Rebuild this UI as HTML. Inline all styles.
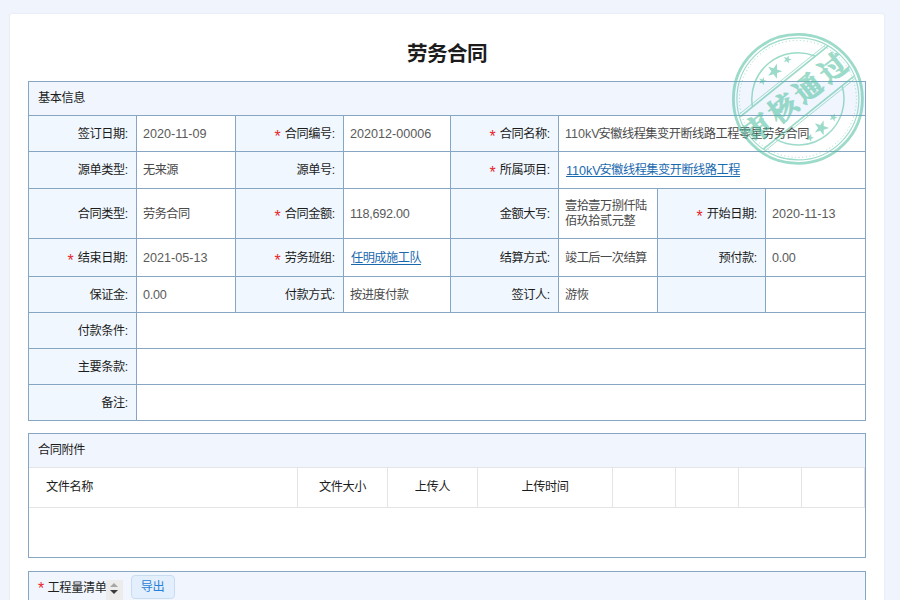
<!DOCTYPE html>
<html lang="zh-CN"><head><meta charset="utf-8"><title>劳务合同</title>
<style>
html,body{margin:0;padding:0}
body{width:900px;height:600px;overflow:hidden;background:#f0f4fc;font-family:"Liberation Sans","Noto Sans CJK SC",sans-serif;font-size:12.6px;color:#5a5a5a;position:relative}
.card{position:absolute;left:10px;top:14px;width:874px;height:600px;background:#fff;border-radius:2px;box-shadow:0 0 2px rgba(150,165,200,.28)}
.ttl{position:absolute;left:0;top:26px;width:874px;height:28px;display:flex;justify-content:center;color:#1c1c1c}
.t{position:relative;display:inline-block;flex:none;white-space:nowrap;font-family:"Liberation Sans","Noto Sans CJK SC",sans-serif;font-size:12.2px;line-height:16px;height:16px;letter-spacing:-0.42px}
.v .t{letter-spacing:-0.5px}
.ttl .t{font-size:20.6px;font-weight:bold;letter-spacing:-0.6px;line-height:28px;height:28px}
.two .t{line-height:15px;height:15px}
.tb{position:absolute;left:28px;width:838px;background:#86a6c3}
#t1{top:81px;height:340px}
.c{position:absolute;display:flex;align-items:center;box-sizing:border-box}
.hd{background:#f1f6fe;padding-left:9px;color:#1c1c1c;padding-bottom:2px}
.l{background:#f0f7fe;justify-content:flex-end;padding-right:6.9px;color:#1c1c1c}
.v{background:#fff;padding-left:6px}
.v .t{color:#4a4a4a}
.v .lk .t{color:inherit}
.k{margin-right:-1.2px}
.n.p{letter-spacing:-.25px}
.n{letter-spacing:0;position:relative;top:0.5px;white-space:nowrap}
.rq{position:relative;display:block;flex:none;width:6px;height:6px;margin-right:4px;top:.4px;line-height:0;font-weight:normal}
.rq i{position:absolute;left:-0.1px;top:-2.4px;color:#e6262c;font-style:normal;font-weight:normal;font-family:"Liberation Sans",sans-serif;font-size:15.9px;line-height:16px;letter-spacing:0}
.lk{color:#1a69af;display:flex;align-items:center;margin-left:1px;position:relative}
.lk:after{content:"";position:absolute;left:0;right:0;bottom:1px;height:1px;background:#1a69af}
.two{display:flex;flex-direction:column}
#t2{top:433px;height:125px}
#t2 .in{position:absolute;left:1px;top:1px;right:1px;bottom:1px;background:#fff}
#t2 .h2{position:absolute;left:0;top:0;right:0;height:33px;background:#f1f6fe;border-bottom:1px solid #e3e5e8;display:flex;align-items:center;padding-left:9px;color:#1c1c1c;box-sizing:content-box;padding-bottom:0}
#t2 .h2 .t{top:-1px}
.th{position:absolute;top:34px;height:39px;display:flex;align-items:center;justify-content:center;border-right:1px solid #e4e4e4;color:#1c1c1c;margin-left:-1px}
.th .t{top:-1px}
.th.first{justify-content:flex-start;padding-left:16px;box-sizing:border-box;margin-left:0}
.hl{position:absolute;left:0;right:0;top:73px;height:1px;background:#e4e4e4}
#t3{top:571px;height:40px}
#t3 .in{position:absolute;left:1px;top:1px;right:1px;bottom:0;background:#f1f6fe}
.r3{top:-1.2px;margin-right:3.6px}
.p3{position:absolute;left:9px;top:8px;height:16px;display:flex;align-items:center;color:#1f1f1f}
.sort{position:absolute;left:77px;top:8px;width:16.5px;height:20px;background:#ececec}
.sort:before{content:"";position:absolute;left:4.4px;top:3.2px;border:4px solid transparent;border-top:0;border-bottom:4.4px solid #a6a6a6}
.sort:after{content:"";position:absolute;left:4.4px;top:10px;border:4px solid transparent;border-bottom:0;border-top:4.4px solid #3c3c3c}
.btn{position:absolute;left:101.5px;top:3px;width:44px;height:24px;box-sizing:border-box;border:1px solid #c8dcf1;border-radius:4px;background:#e3effc;color:#2a7fd6;display:flex;align-items:center;justify-content:center}
.stamp{position:absolute;left:731.5px;top:33.3px;opacity:.56}
</style></head><body>
<div class="card">
<div class="ttl"><span class="t" style="width:80px">劳务合同</span></div>
</div>
<div class="tb" id="t1">
<div class="c hd" style="left:1px;top:1px;width:836px;height:33px"><span class="t" style="width:47.12px">基本信息</span></div>
<div class="c l" style="left:1px;top:35px;width:107px;height:35px"><span class="t" style="width:51.42px">签订日期:</span></div>
<div class="c v" style="left:109px;top:35px;width:98px;height:35px"><span class="n">2020-11-09</span></div>
<div class="c l" style="left:208px;top:35px;width:107px;height:35px"><b class="rq"><i>*</i></b><span class="t" style="width:51.42px">合同编号:</span></div>
<div class="c v" style="left:316px;top:35px;width:106px;height:35px"><span class="n">202012-00006</span></div>
<div class="c l" style="left:423px;top:35px;width:107px;height:35px"><b class="rq"><i>*</i></b><span class="t" style="width:51.42px">合同名称:</span></div>
<div class="c v" style="left:531px;top:35px;width:306px;height:35px"><span class="n k">110kV</span><span class="t" style="width:210.6px">安徽线程集变开断线路工程零星劳务合同</span></div>
<div class="c l" style="left:1px;top:71px;width:107px;height:36px"><span class="t" style="width:51.42px">源单类型:</span></div>
<div class="c v" style="left:109px;top:71px;width:98px;height:36px"><span class="t" style="width:35.1px">无来源</span></div>
<div class="c l" style="left:208px;top:71px;width:107px;height:36px"><span class="t" style="width:39.64px">源单号:</span></div>
<div class="c v" style="left:316px;top:71px;width:106px;height:36px"></div>
<div class="c l" style="left:423px;top:71px;width:107px;height:36px"><b class="rq"><i>*</i></b><span class="t" style="width:51.42px">所属项目:</span></div>
<div class="c v" style="left:531px;top:71px;width:306px;height:36px"><a class="lk"><span class="n k">110kV</span><span class="t" style="width:140.4px">安徽线程集变开断线路工程</span></a></div>
<div class="c l" style="left:1px;top:108px;width:107px;height:49px"><span class="t" style="width:51.42px">合同类型:</span></div>
<div class="c v" style="left:109px;top:108px;width:98px;height:49px"><span class="t" style="width:46.8px">劳务合同</span></div>
<div class="c l" style="left:208px;top:108px;width:107px;height:49px"><b class="rq"><i>*</i></b><span class="t" style="width:51.42px">合同金额:</span></div>
<div class="c v" style="left:316px;top:108px;width:106px;height:49px"><span class="n p">118,692.00</span></div>
<div class="c l" style="left:423px;top:108px;width:107px;height:49px"><span class="t" style="width:51.42px">金额大写:</span></div>
<div class="c v" style="left:531px;top:108px;width:98px;height:49px"><span class="two"><span class="t" style="width:81.9px">壹拾壹万捌仟陆</span><span class="t" style="width:70.2px">佰玖拾贰元整</span></span></div>
<div class="c l" style="left:630px;top:108px;width:107px;height:49px"><b class="rq"><i>*</i></b><span class="t" style="width:51.42px">开始日期:</span></div>
<div class="c v" style="left:738px;top:108px;width:99px;height:49px"><span class="n">2020-11-13</span></div>
<div class="c l" style="left:1px;top:158px;width:107px;height:37px"><b class="rq"><i>*</i></b><span class="t" style="width:51.42px">结束日期:</span></div>
<div class="c v" style="left:109px;top:158px;width:98px;height:37px"><span class="n">2021-05-13</span></div>
<div class="c l" style="left:208px;top:158px;width:107px;height:37px"><b class="rq"><i>*</i></b><span class="t" style="width:51.42px">劳务班组:</span></div>
<div class="c v" style="left:316px;top:158px;width:106px;height:37px"><a class="lk"><span class="t" style="width:70.2px">任明成施工队</span></a></div>
<div class="c l" style="left:423px;top:158px;width:107px;height:37px"><span class="t" style="width:51.42px">结算方式:</span></div>
<div class="c v" style="left:531px;top:158px;width:98px;height:37px"><span class="t" style="width:81.9px">竣工后一次结算</span></div>
<div class="c l" style="left:630px;top:158px;width:107px;height:37px"><span class="t" style="width:39.64px">预付款:</span></div>
<div class="c v" style="left:738px;top:158px;width:99px;height:37px"><span class="n p">0.00</span></div>
<div class="c l" style="left:1px;top:196px;width:107px;height:35px"><span class="t" style="width:39.64px">保证金:</span></div>
<div class="c v" style="left:109px;top:196px;width:98px;height:35px"><span class="n p">0.00</span></div>
<div class="c l" style="left:208px;top:196px;width:107px;height:35px"><span class="t" style="width:51.42px">付款方式:</span></div>
<div class="c v" style="left:316px;top:196px;width:106px;height:35px"><span class="t" style="width:58.5px">按进度付款</span></div>
<div class="c l" style="left:423px;top:196px;width:107px;height:35px"><span class="t" style="width:39.64px">签订人:</span></div>
<div class="c v" style="left:531px;top:196px;width:98px;height:35px"><span class="t" style="width:23.4px">游恢</span></div>
<div class="c l" style="left:630px;top:196px;width:107px;height:35px"></div>
<div class="c v" style="left:738px;top:196px;width:99px;height:35px"></div>
<div class="c l" style="left:1px;top:232px;width:107px;height:35px"><span class="t" style="width:51.42px">付款条件:</span></div>
<div class="c v" style="left:109px;top:232px;width:728px;height:35px"></div>
<div class="c l" style="left:1px;top:268px;width:107px;height:35px"><span class="t" style="width:51.42px">主要条款:</span></div>
<div class="c v" style="left:109px;top:268px;width:728px;height:35px"></div>
<div class="c l" style="left:1px;top:304px;width:107px;height:35px"><span class="t" style="width:27.86px">备注:</span></div>
<div class="c v" style="left:109px;top:304px;width:728px;height:35px"></div>
</div>
<div class="tb" id="t2"><div class="in">
<div class="h2"><span class="t" style="width:47.12px">合同附件</span></div>
<div class="th first" style="left:1px;width:268px"><span class="t" style="width:47.12px">文件名称</span></div>
<div class="th" style="left:270px;width:89px"><span class="t" style="width:47.12px">文件大小</span></div>
<div class="th" style="left:360px;width:89px"><span class="t" style="width:35.34px">上传人</span></div>
<div class="th" style="left:450px;width:134px"><span class="t" style="width:47.12px">上传时间</span></div>
<div class="th" style="left:585px;width:62px"></div>
<div class="th" style="left:648px;width:62px"></div>
<div class="th" style="left:711px;width:62px"></div>
<div class="th" style="left:774px;width:62px"></div>
<div class="hl"></div>
</div></div>
<div class="tb" id="t3"><div class="in">
<div class="p3"><b class="rq r3"><i>*</i></b><span class="t" style="width:58.9px">工程量清单</span></div><div class="sort"></div>
<div class="btn"><span class="t" style="width:23.56px">导出</span></div>
</div></div>
<svg class="stamp" width="132" height="132" viewBox="0 0 132 132"><circle cx="65.9" cy="65.9" r="64.5" fill="none" stroke="#4fbf9f" stroke-width="2.8"/><circle cx="65.9" cy="65.9" r="61" fill="none" stroke="#4fbf9f" stroke-width="1.1"/><circle cx="65.9" cy="65.9" r="58.5" fill="none" stroke="#4fbf9f" stroke-width="1" stroke-dasharray="1 2.6"/><clipPath id="sc"><circle cx="0" cy="0" r="63"/></clipPath><g transform="translate(65.9,65.9) rotate(-38.8)"><path d="M40.35 -22.3A46.1 46.1 0 0 0 -40.35 -22.3" fill="none" stroke="#4fbf9f" stroke-width="1.5"/><path d="M-42.69 17.4A46.1 46.1 0 0 0 42.69 17.4" fill="none" stroke="#4fbf9f" stroke-width="1.5"/><path d="M-56.35 -22.3H56.35" stroke="#4fbf9f" stroke-width="1.7"/><path d="M-58.05 17.4H58.05" stroke="#4fbf9f" stroke-width="1.7"/><path d="M-55.29 -24.8H55.29" stroke="#4fbf9f" stroke-width="0.8"/><path d="M-57.24 19.9H57.24" stroke="#4fbf9f" stroke-width="0.8"/><polygon points="5.63,-40.47 2.22,-36.05 5.18,-31.31 -0.08,-33.19 -3.67,-28.91 -3.51,-34.49 -8.69,-36.58 -3.33,-38.16 -2.95,-43.73 0.21,-39.12" fill="#4fbf9f"/><polygon points="-12.7,-38.35 -14.58,-35.92 -12.95,-33.31 -15.85,-34.34 -17.83,-31.98 -17.74,-35.06 -20.59,-36.21 -17.64,-37.08 -17.43,-40.15 -15.69,-37.61" fill="#4fbf9f"/><polygon points="20.1,-39.65 18.22,-37.22 19.85,-34.61 16.95,-35.64 14.97,-33.28 15.06,-36.36 12.21,-37.51 15.16,-38.38 15.37,-41.45 17.11,-38.91" fill="#4fbf9f"/><polygon points="6.53,32.93 3.12,37.35 6.08,42.09 0.82,40.21 -2.77,44.49 -2.61,38.91 -7.79,36.82 -2.43,35.24 -2.05,29.67 1.11,34.28" fill="#4fbf9f"/><polygon points="-11.4,35.45 -13.28,37.88 -11.65,40.49 -14.55,39.46 -16.53,41.82 -16.44,38.74 -19.29,37.59 -16.34,36.72 -16.13,33.65 -14.39,36.19" fill="#4fbf9f"/><polygon points="19.6,34.25 17.72,36.68 19.35,39.29 16.45,38.26 14.47,40.62 14.56,37.54 11.71,36.39 14.66,35.52 14.87,32.45 16.61,34.99" fill="#4fbf9f"/><g clip-path="url(#sc)"><text x="-63.8" y="7.9" font-size="28" letter-spacing="4.2" font-weight="bold" fill="#4fbf9f" stroke="#4fbf9f" stroke-width="0.95" stroke-linejoin="round" font-family="'Liberation Serif','Noto Serif CJK SC',serif">审核通过</text></g></g></svg>
</body></html>
